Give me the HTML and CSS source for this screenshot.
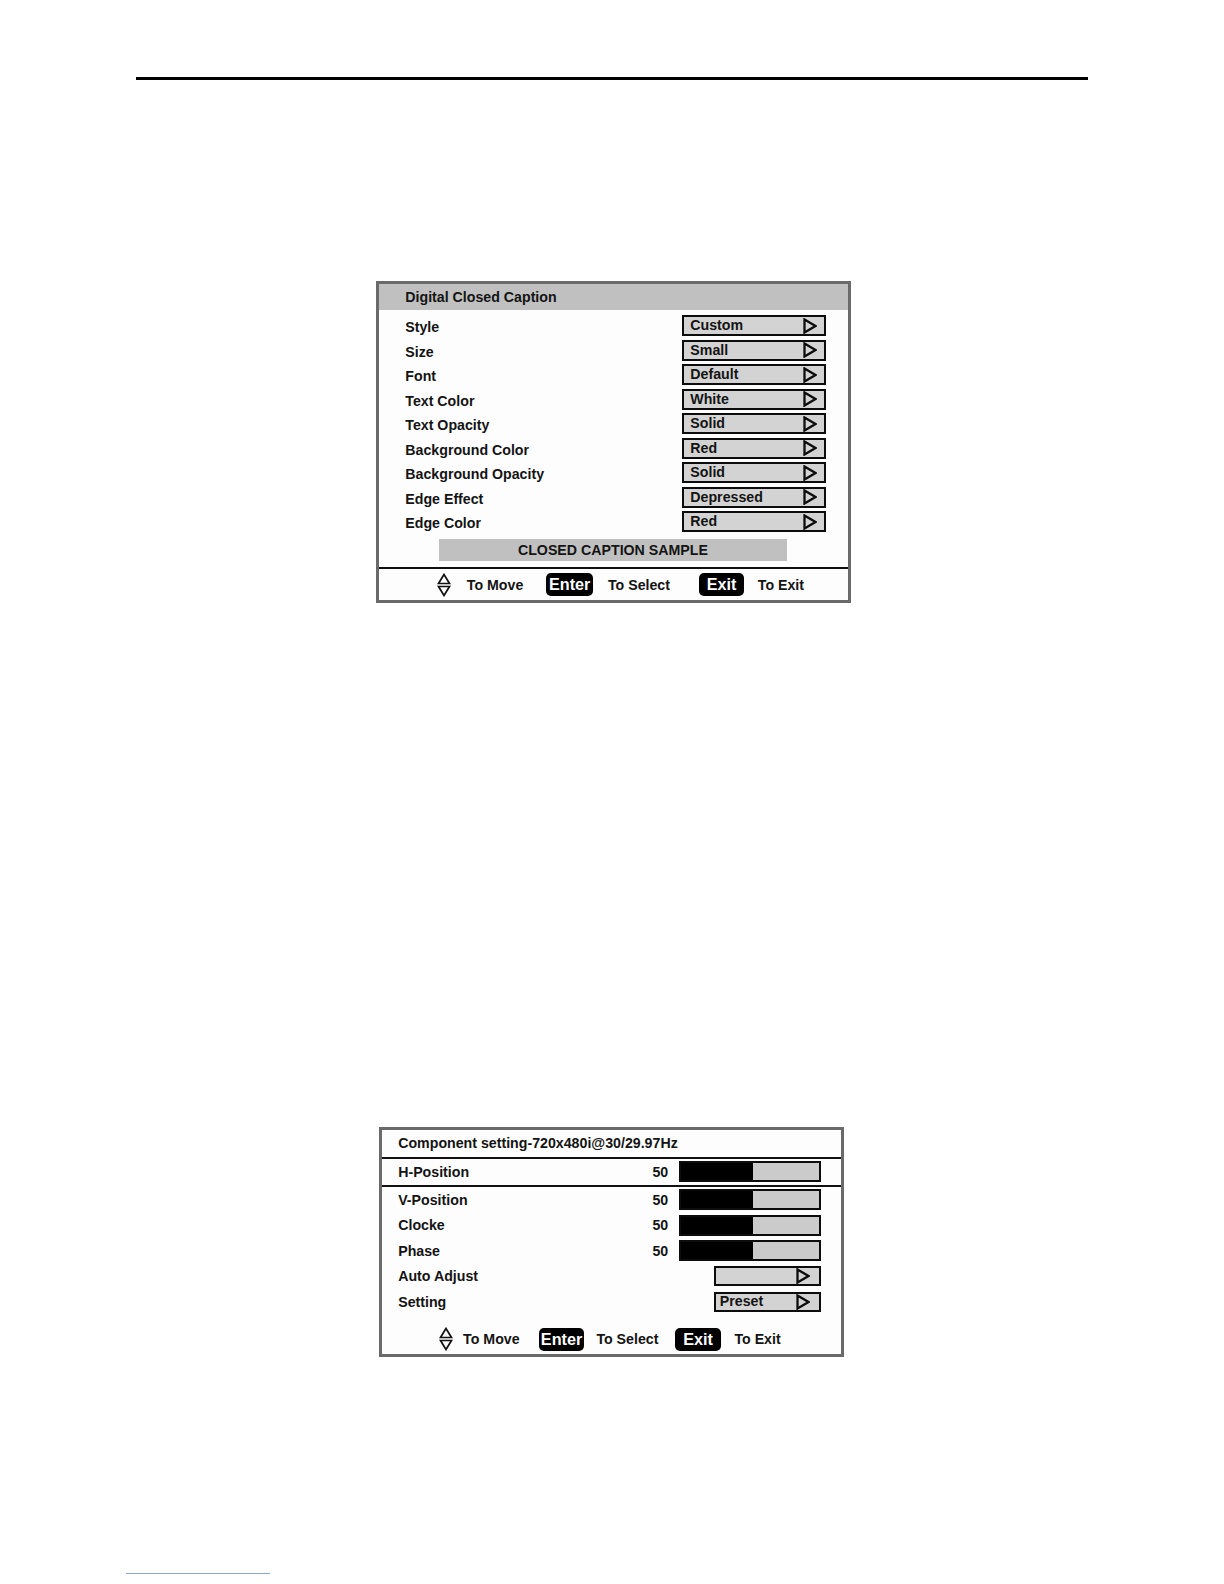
FILE: index.html
```html
<!DOCTYPE html>
<html>
<head>
<meta charset="utf-8">
<link rel="stylesheet" href="styles.css">
</head>
<body>
<div class="page">
  <div class="rule"></div>

  <div class="osd cc">
    <div class="cc-head">Digital Closed Caption</div>
    <div class="cc-rows">
      <div class="cc-row"><span class="lbl">Style</span><span class="sel"><span class="val">Custom</span><svg class="tri" viewBox="0 0 14 16"><polygon points="1.5,1.5 12.5,8 1.5,14.5"/></svg></span></div>
      <div class="cc-row"><span class="lbl">Size</span><span class="sel"><span class="val">Small</span><svg class="tri" viewBox="0 0 14 16"><polygon points="1.5,1.5 12.5,8 1.5,14.5"/></svg></span></div>
      <div class="cc-row"><span class="lbl">Font</span><span class="sel"><span class="val">Default</span><svg class="tri" viewBox="0 0 14 16"><polygon points="1.5,1.5 12.5,8 1.5,14.5"/></svg></span></div>
      <div class="cc-row"><span class="lbl">Text Color</span><span class="sel"><span class="val">White</span><svg class="tri" viewBox="0 0 14 16"><polygon points="1.5,1.5 12.5,8 1.5,14.5"/></svg></span></div>
      <div class="cc-row"><span class="lbl">Text Opacity</span><span class="sel"><span class="val">Solid</span><svg class="tri" viewBox="0 0 14 16"><polygon points="1.5,1.5 12.5,8 1.5,14.5"/></svg></span></div>
      <div class="cc-row"><span class="lbl">Background Color</span><span class="sel"><span class="val">Red</span><svg class="tri" viewBox="0 0 14 16"><polygon points="1.5,1.5 12.5,8 1.5,14.5"/></svg></span></div>
      <div class="cc-row"><span class="lbl">Background Opacity</span><span class="sel"><span class="val">Solid</span><svg class="tri" viewBox="0 0 14 16"><polygon points="1.5,1.5 12.5,8 1.5,14.5"/></svg></span></div>
      <div class="cc-row"><span class="lbl">Edge Effect</span><span class="sel"><span class="val">Depressed</span><svg class="tri" viewBox="0 0 14 16"><polygon points="1.5,1.5 12.5,8 1.5,14.5"/></svg></span></div>
      <div class="cc-row"><span class="lbl">Edge Color</span><span class="sel"><span class="val">Red</span><svg class="tri" viewBox="0 0 14 16"><polygon points="1.5,1.5 12.5,8 1.5,14.5"/></svg></span></div>
    </div>
    <div class="sample">CLOSED CAPTION SAMPLE</div>
    <div class="foot cc-foot">
      <svg class="updown" viewBox="0 0 14 24"><polygon points="7,1.5 1.5,10.5 12.5,10.5"/><polygon points="1.5,13.5 12.5,13.5 7,22.5"/></svg>
      <span class="hint h-move">To Move</span>
      <span class="pill p-enter">Enter</span>
      <span class="hint h-select">To Select</span>
      <span class="pill p-exit">Exit</span>
      <span class="hint h-exit">To Exit</span>
    </div>
  </div>

  <div class="osd comp">
    <div class="comp-head">Component setting-720x480i@30/29.97Hz</div>
    <div class="comp-row hl"><span class="lbl">H-Position</span><span class="num">50</span><span class="bar"><span class="fill" style="width:52%"></span></span></div>
    <div class="comp-rows">
      <div class="comp-row"><span class="lbl">V-Position</span><span class="num">50</span><span class="bar"><span class="fill" style="width:52%"></span></span></div>
      <div class="comp-row"><span class="lbl">Clocke</span><span class="num">50</span><span class="bar"><span class="fill" style="width:52%"></span></span></div>
      <div class="comp-row"><span class="lbl">Phase</span><span class="num">50</span><span class="bar"><span class="fill" style="width:52%"></span></span></div>
      <div class="comp-row"><span class="lbl">Auto Adjust</span><span class="num"></span><span class="sel2"><span class="val"></span><svg class="tri" viewBox="0 0 14 16"><polygon points="1.5,1.5 12.5,8 1.5,14.5"/></svg></span></div>
      <div class="comp-row"><span class="lbl">Setting</span><span class="num"></span><span class="sel2"><span class="val">Preset</span><svg class="tri" viewBox="0 0 14 16"><polygon points="1.5,1.5 12.5,8 1.5,14.5"/></svg></span></div>
    </div>
    <div class="foot comp-foot">
      <svg class="updown" viewBox="0 0 14 24"><polygon points="7,1.5 1.5,10.5 12.5,10.5"/><polygon points="1.5,13.5 12.5,13.5 7,22.5"/></svg>
      <span class="hint c-move">To Move</span>
      <span class="pill c-enter">Enter</span>
      <span class="hint c-select">To Select</span>
      <span class="pill c-exit">Exit</span>
      <span class="hint c-exitt">To Exit</span>
    </div>
  </div>

  <div class="bottom-link"></div>
</div>
</body>
</html>
```

FILE: styles.css
```css
html, body {
  margin: 0;
  padding: 0;
  background: #ffffff;
}

.page {
  width: 1224px;
  font-family: "Liberation Sans", Arial, sans-serif;
  font-weight: bold;
  font-size: 14.2px;
  color: #141414;
  overflow: hidden;
}

.rule {
  margin: 77px 0 0 136px;
  width: 952px;
  height: 3px;
  background: #000;
}

.osd {
  box-sizing: border-box;
  border: 3px solid #6a6a6a;
  background: #fdfdfd;
}

/* ---------- Digital Closed Caption ---------- */
.cc {
  margin: 201px 0 0 376px;
  width: 475px;
}

.cc-head {
  height: 26.3px;
  line-height: 26.3px;
  padding-left: 26.3px;
  background: #c0c0c0;
}

.cc-rows {
  padding-top: 5px;
}

.cc-row {
  height: 24.5px;
  display: flex;
  align-items: flex-start;
  padding-left: 26.3px;
  padding-right: 22.2px;
}

.cc-row .lbl {
  flex: 1;
  line-height: 21.2px;
  padding-top: 2px;
}

.sel {
  box-sizing: border-box;
  width: 143.5px;
  height: 21.2px;
  border: 2px solid #0c0c0c;
  background: #d3d3d3;
  display: flex;
  align-items: center;
  padding-left: 6px;
  padding-right: 7px;
}

.val {
  flex: 1;
  line-height: 17px;
}

.tri {
  width: 14px;
  height: 16px;
  display: block;
}

.tri polygon {
  fill: none;
  stroke: #0c0c0c;
  stroke-width: 2.3;
  stroke-linejoin: miter;
}

.sample {
  margin: 3px 0 0 59.6px;
  width: 348.7px;
  height: 22.2px;
  line-height: 22.2px;
  background: #c0c0c0;
  text-align: center;
}

.foot {
  display: flex;
  align-items: center;
}

.cc-foot {
  margin-top: 6px;
  border-top: 2px solid #111;
  height: 31.3px;
  padding-left: 57.6px;
}

.updown {
  width: 14px;
  height: 24px;
  display: block;
}

.updown polygon {
  fill: none;
  stroke: #111;
  stroke-width: 1.7;
}

.hint {
  line-height: 18px;
}

.pill {
  box-sizing: border-box;
  height: 23.2px;
  line-height: 23.2px;
  border-radius: 5px;
  background: #000;
  color: #fff;
  font-size: 16.2px;
  text-align: center;
}

.h-move { margin-left: 16.2px; }
.p-enter { margin-left: 23.2px; width: 46.5px; }
.h-select { margin-left: 15px; }
.p-exit { margin-left: 28.8px; width: 45.5px; }
.h-exit { margin-left: 13.5px; }

/* ---------- Component setting ---------- */
.comp {
  margin: 524px 0 0 379px;
  width: 465px;
}

.comp-head {
  height: 26.3px;
  line-height: 26.3px;
  padding-left: 16.2px;
  border-bottom: 2px solid #111;
}

.comp-row {
  display: flex;
  align-items: center;
  height: 25.57px;
  padding-left: 16.2px;
  padding-right: 20.2px;
}

.comp-row.hl {
  height: 26.3px;
  border-bottom: 2px solid #111;
}

.comp-row .lbl {
  flex: 1;
}

.num {
  margin-right: 11.1px;
}

.bar {
  box-sizing: border-box;
  width: 141.5px;
  height: 21.2px;
  border: 2px solid #0c0c0c;
  background: #cbcbcb;
  display: flex;
}

.fill {
  display: block;
  height: 100%;
  background: #000;
}

.sel2 {
  box-sizing: border-box;
  width: 107px;
  height: 20.2px;
  border: 2px solid #0c0c0c;
  background: #d3d3d3;
  display: flex;
  align-items: center;
  padding-left: 4px;
  padding-right: 9px;
}

.comp-foot {
  height: 38.9px;
  box-sizing: border-box;
  padding-top: 10.1px;
  padding-left: 56.6px;
}

.c-move { margin-left: 10.5px; }
.c-enter { margin-left: 19.2px; width: 45.5px; }
.c-select { margin-left: 12.1px; }
.c-exit { margin-left: 17px; width: 45.5px; }
.c-exitt { margin-left: 13.5px; }

.bottom-link {
  margin: 216.5px 0 0 126px;
  width: 143.5px;
  height: 1px;
  background: #8ea4de;
}
```
